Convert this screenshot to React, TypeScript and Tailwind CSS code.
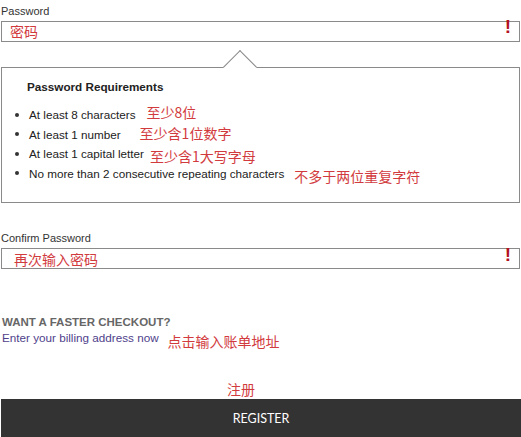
import React from "react";

const cjk = "font-['Noto_Sans_CJK_SC','Noto_Sans',sans-serif]";
const red = "text-[#d23b3e]";

function Bang() {
  return (
    <span className="font-['Liberation_Sans',Arial,sans-serif] font-bold text-[19px] leading-none text-[#b3121f]">
      !
    </span>
  );
}

export default function App() {
  const reqs: { en: string; zh: string; gap: string; shift: string }[] = [
    { en: "At least 8 characters", zh: "至少8位", gap: "ml-[11px]", shift: "-top-[3px]" },
    { en: "At least 1 number", zh: "至少含1位数字", gap: "ml-[19px]", shift: "-top-[1px]" },
    { en: "At least 1 capital letter", zh: "至少含1大写字母", gap: "ml-[6px]", shift: "top-[2px]" },
    {
      en: "No more than 2 consecutive repeating characters",
      zh: "不多于两位重复字符",
      gap: "ml-[10px]",
      shift: "top-[3px]",
    },
  ];

  return (
    <div className="w-[521px] h-[437px] bg-white overflow-hidden flex flex-col font-['Liberation_Sans',Arial,sans-serif] text-[#333]">
      {/* Password */}
      <div className="pt-[5px] pl-[1px] text-[11px] leading-[13px] text-[#333]">Password</div>
      <div className="mt-[3px] ml-[1px] w-[519px] h-[21px] border border-[#8a8a8a] bg-white flex items-center justify-between pl-[8px] pr-[8px]">
        <span className={`${cjk} ${red} text-[14px] leading-none relative -top-[1px]`}>密码</span>
        <span className="relative -top-[4px]">
          <Bang />
        </span>
      </div>

      {/* Requirements popover */}
      <div className="mt-[25px] ml-[1px] w-[519px] h-[136px] border border-[#8a8a8a] bg-white relative">
        <div className="absolute left-[226px] -top-[13px] w-[24px] h-[24px] rotate-45 bg-white border-l border-t border-[#8a8a8a]" />
        <div className="relative pt-[12px] pl-[25px] text-[11.7px] leading-[14px] font-bold text-[#222]">
          Password Requirements
        </div>
        <ul className="relative mt-[11px] ml-[13px]">
          {reqs.map((r) => (
            <li key={r.en} className="flex items-center h-[19.5px] text-[11.7px] leading-[19.5px] text-[#222]">
              <span className="inline-block w-[4px] h-[4px] rounded-full bg-[#333] mr-[10px]" />
              <span>{r.en}</span>
              <span className={`${cjk} ${red} text-[14px] leading-none relative ${r.shift} ${r.gap}`}>{r.zh}</span>
            </li>
          ))}
        </ul>
      </div>

      {/* Confirm Password */}
      <div className="mt-[29px] pl-[1px] text-[11px] leading-[13px] text-[#333]">Confirm Password</div>
      <div className="mt-[3px] ml-[1px] w-[519px] h-[21px] border border-[#8a8a8a] bg-white flex items-center justify-between pl-[12px] pr-[8px]">
        <span className={`${cjk} ${red} text-[14px] leading-none relative`}>再次输入密码</span>
        <span className="relative -top-[3px]">
          <Bang />
        </span>
      </div>

      {/* Faster checkout */}
      <div className="mt-[46px] pl-[2px] text-[11.5px] leading-[14px] font-bold text-[#666]">WANT A FASTER CHECKOUT?</div>
      <div className="mt-[2px] pl-[2px] flex items-center text-[11.7px] leading-[14px] text-[#4f3f8c]">
        <span>Enter your billing address now</span>
        <span className={`${cjk} ${red} text-[14px] leading-none ml-[9px] relative top-[3px]`}>点击输入账单地址</span>
      </div>

      {/* Register */}
      <div className="mt-auto pl-[227px] pb-[1px]">
        <span className={`${cjk} ${red} text-[14px] leading-[16px] relative top-[4px]`}>注册</span>
      </div>
      <div className="relative ml-[1px] w-[520px] h-[38px] bg-[#333333] flex items-center justify-center">
        <span className="font-['Lato','Open_Sans',sans-serif] text-[12.5px] text-white relative top-[1px]">REGISTER</span>
      </div>
    </div>
  );
}
